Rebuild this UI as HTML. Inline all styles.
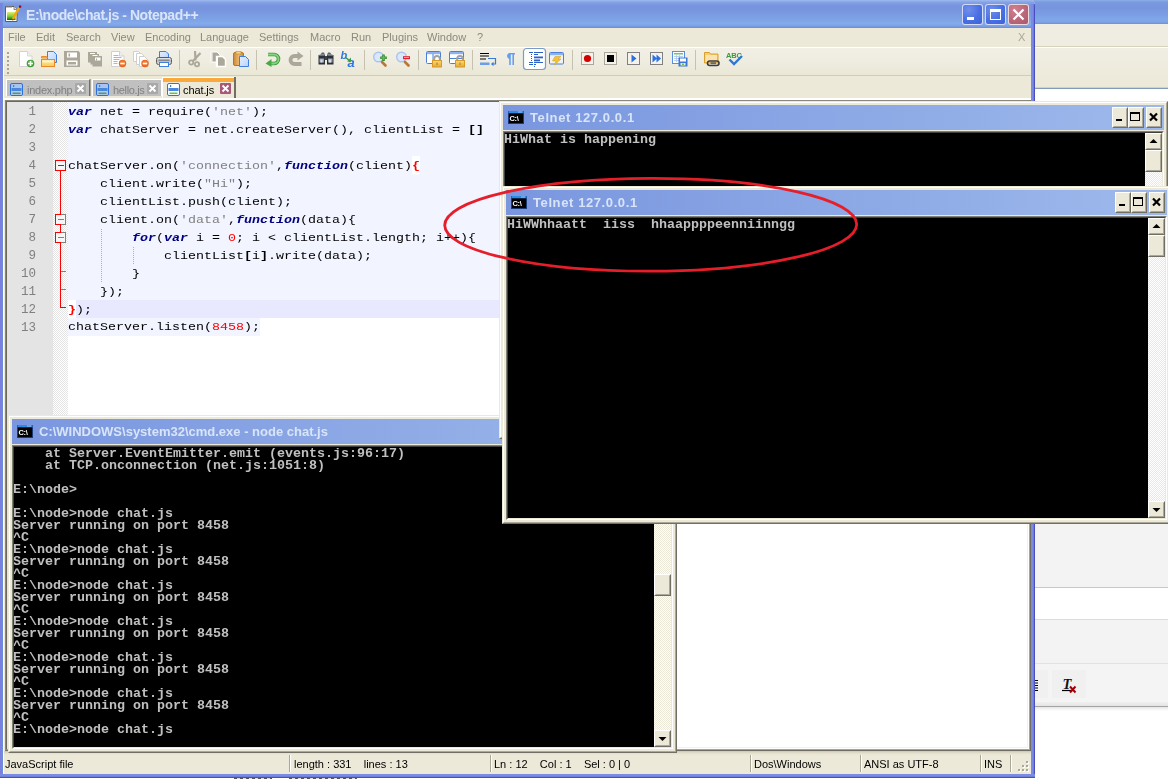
<!DOCTYPE html>
<html>
<head>
<meta charset="utf-8">
<title>Notepad++</title>
<style>
*{box-sizing:border-box;margin:0;padding:0}
html,body{width:1168px;height:779px;overflow:hidden;background:#fff;font-family:"Liberation Sans",sans-serif;}
body{position:relative}
.abs{position:absolute}
.code,.ln,.cap .txt,.title .txt,.menubar,.status,.tab .nm{will-change:transform}
/* ---------- background window on right ---------- */
#bg{position:absolute;left:1020px;top:0;width:148px;height:779px;background:#fff}
#bg .t{position:absolute;left:0;right:0;top:0;height:24px;background:linear-gradient(#8db0ea 0,#7b9ae0 2px,#7794de 7px,#7a9be2 13px,#80a8e8 20px,#7ea4e6 22px,#728cda 24px)}
#bg .a{position:absolute;left:0;right:0;top:24px;height:22px;background:#efede2}
#bg .l1{position:absolute;left:0;right:0;top:46px;height:1px;background:#d8d2bd}
#bg .b{position:absolute;left:0;right:0;top:48px;height:39px;background:linear-gradient(#f0eee3,#ece9d8)}
#bg .l2{position:absolute;left:0;right:0;top:87px;height:1px;background:#d8d2bd}
#bg .l3{position:absolute;left:0;right:0;top:88px;height:1px;background:#7f9db9}
#bg .g1{position:absolute;left:0;right:0;top:522px;height:65px;background:#f3f3f3}
#bg .g1l{position:absolute;left:0;right:0;top:587px;height:1px;background:#c8c8c8}
#bg .g2l{position:absolute;left:0;right:0;top:619px;height:1px;background:#dcdcdc}
#bg .g2{position:absolute;left:0;right:0;top:620px;height:43px;background:#f3f3f3}
#bg .g2b{position:absolute;left:0;right:0;top:663px;height:1px;background:#e2e2e2}
#bg .g3{position:absolute;left:0;right:0;top:664px;height:38px;background:#f4f4f4}
#bg .g3s{position:absolute;left:0;right:0;top:702px;height:4px;background:linear-gradient(#f0f0f0,#e4e4e4)}
#bg .g3l{position:absolute;left:0;right:0;top:706px;height:1px;background:#a4a4a4}
#bg .g3t{position:absolute;left:0;right:0;top:707px;height:4px;background:linear-gradient(#e6e6e6,#fff)}
#bg .bt{position:absolute;top:670px;height:28px;background:#f0f0f0}
/* ---------- notepad++ ---------- */
#npp{position:absolute;left:-1px;top:-2px;width:1036px;height:780px;background:#ece9d8;border-radius:3px 8px 0 0;overflow:hidden}
#npp .fl{position:absolute;left:0;top:5px;bottom:0;width:4px;background:linear-gradient(90deg,#5a5cc8 0,#5a5cc8 1px,#7b7fde 1px,#7b7fde 2px,#7486dd 2px,#7486dd 3px,#6d8ddc 3px)}
#npp .fr{position:absolute;right:0;top:6px;bottom:0;width:4px;background:linear-gradient(90deg,#7b8be3 0,#7b8be3 2px,#6f7ed8 2px,#6f7ed8 3px,#4a4fc0 3px)}
#npp .fb{position:absolute;left:0;right:0;bottom:0;height:4px;background:linear-gradient(180deg,#7b8be3 0,#7b8be3 2px,#6f7ed8 2px,#6f7ed8 3px,#4a4fc0 3px)}
#npp .title{position:absolute;left:0;right:0;top:0;height:30px;background:linear-gradient(#a8c0f0 0,#9ebaee 2px,#86a4e6 4px,#7896df 7px,#7794de 11px,#7a9ae1 16px,#7fa4e6 22px,#83abea 26px,#7d9fe5 28px,#6f88d8 30px)}
#npp .title .txt{position:absolute;left:27px;top:9px;font-weight:bold;font-size:14px;color:#d9e4f8;letter-spacing:-0.45px;white-space:nowrap}
.menubar{position:absolute;left:4px;right:4px;top:30px;height:19px;background:#ece9d8;font-size:11px;color:#8c8a7e}
.menubar span{position:absolute;top:3px}
.toolbar{position:absolute;left:4px;right:4px;top:49px;height:29px;background:linear-gradient(#fff 0,#fff 1px,#f2f0e6 1px,#efede0 14px,#eae7d5 28px,#d1cdb9 28px,#d1cdb9 29px)}
.tabbar{position:absolute;left:4px;right:4px;top:78px;height:24px;background:#ece9d8}
.status{position:absolute;left:4px;right:4px;top:753px;height:23px;background:linear-gradient(#c9c6b4 0,#e2dfcd 2px,#ece9d8 4px);font-size:11px;color:#000}
.status span{position:absolute;top:7px;white-space:nowrap}
.status i{position:absolute;top:4px;width:2px;height:17px;border-left:1px solid #aca899;border-right:1px solid #fff}

.tb{position:absolute;top:6px;width:21px;height:21px;border-radius:3px;border:1px solid rgba(255,255,255,.75);background:radial-gradient(circle at 30% 25%,#6f8fec 0%,#4a6fe2 55%,#3d62d6 100%);overflow:hidden}
.tb svg{position:absolute;left:-1px;top:-1px}
.tb.cl{background:radial-gradient(circle at 30% 25%,#cf8090 0%,#b9687a 55%,#a85868 100%)}
.mx{position:absolute;left:1017px;top:3px;font-size:11px;color:#8c8a7d}
.tab{position:absolute;top:3px;height:17px;background:#c0c0c0;border-top:1px solid #fff;border-left:1px solid #fff;border-right:1px solid #716f64;box-shadow:1px 0 0 #aaa798;font-size:11px;color:#808080}
.tab .nm{position:absolute;left:20px;top:4px;white-space:nowrap;letter-spacing:-0.25px}
.tab svg{position:absolute}
.tab.act{top:2px;height:22px;background:#ece9d8;border-top:4px solid #faaa3c;border-left:0;border-right:0;margin-left:1px;box-shadow:0 -1px 0 #fff,-1px 0 0 #fff,-1px -1px 0 #fff,2px 0 0 #716f64,2px -1px 0 #716f64;color:#000}
.tab.act .nm{top:2px;letter-spacing:-0.1px;left:20px}
.tab.act svg:first-child{top:1px !important}
.tab.nb{border-right:1px solid #fff}
/* editor */
#ed{position:absolute;left:6px;top:102px;width:1026px;height:651px;background:#fff;border:2px solid;border-color:#8a887a #716f64 #716f64 #8a887a;}
#ed .in{position:absolute;left:-1px;top:-1px;right:-1px;bottom:-1px;border:1px solid;border-color:#6b695e #a8a594 #a8a594 #6b695e}
#ed .in2{position:absolute;right:0;bottom:0;left:0;top:0;border:1px solid;border-color:transparent #fff #fff transparent}
#ed .in3{position:absolute;right:1px;bottom:1px;left:0;top:0;border:1px solid;border-color:transparent #f4f1e6 #f4f1e6 transparent}
.lnm{position:absolute;left:0;top:0;width:46px;bottom:0;background:#e4e4e4}
.fdm{position:absolute;left:46px;top:0;width:15px;bottom:0;background-color:#fff;background-image:linear-gradient(45deg,#e4e4e4 25%,transparent 25%,transparent 75%,#e4e4e4 75%),linear-gradient(45deg,#e4e4e4 25%,transparent 25%,transparent 75%,#e4e4e4 75%);background-size:2px 2px;background-position:0 0,1px 1px}
.code{position:absolute;left:61px;top:0;right:0;font-family:"Liberation Mono",monospace;font-size:13.33px;line-height:18px;white-space:pre;color:#000}
.code div{height:18px;background:#f2f4ff;padding-top:1px;line-height:17px}
.code div.cur{background:#e8e8ff}
.code div.last{background:transparent}
.code div.last{padding-top:0;line-height:18px}
.code div.last span.w{background:#f2f4ff;display:inline-block;height:18px;line-height:18px;vertical-align:top}
.code .t{display:inline-block;font-weight:normal;transform:scaleY(0.88);transform-origin:0 12.6px;height:17px}
.k{color:#000080;font-weight:bold;font-style:italic}
.s{color:#808080}
.n{color:#ff0000}
.br{color:#ff0000;font-weight:bold;position:relative}
.br:before{content:"";position:absolute;left:0;width:100%;top:-3.8px;height:20.45px;background:#fff;z-index:-1}
.o{font-weight:bold}
.ln{position:absolute;left:0;top:1px;width:29px;font-family:"Liberation Mono",monospace;font-size:12.5px;line-height:18px;color:#808080;text-align:right;white-space:pre}
/* ---------- classic console windows ---------- */
.cw{position:absolute;width:669px;height:338px;background:#ece9d8;border:1px solid;border-color:#ece9d8 #716f64 #716f64 #ece9d8}
.cw .b2{position:absolute;left:0;top:0;right:0;bottom:0;border:1px solid;border-color:#fff #aca899 #aca899 #fff}
.cw .cap{position:absolute;left:3px;top:3px;width:661px;height:25px;background:linear-gradient(90deg,#7a96df,#9db9eb)}
.cw .cap .txt{position:absolute;left:27px;top:5px;font-weight:bold;font-size:13px;color:#d8e4f8;white-space:nowrap;letter-spacing:0.25px}
.cw .cl{position:absolute;left:3px;top:29px;width:661px;height:304px;border:1px solid;border-color:#808076 #fff #fff #808076;background:#000}
.cw .cl .i2{position:absolute;left:0;top:0;right:0;bottom:0;border:1px solid;border-color:#404040 #ece9d8 #ece9d8 #404040}
.cw .con{position:absolute;left:5px;top:31px;width:640px;height:300px;background:#000;overflow:hidden}
.cw .con pre{position:absolute;left:-1px;top:0.5px;width:641px;height:300px;color:#c0c0c0;font-family:"Liberation Mono",monospace;font-weight:bold;font-size:13.33px;line-height:12px;white-space:pre;will-change:transform}
.cw .sb{position:absolute;left:645px;top:31px;width:17px;height:300px;background-color:#fff;background-image:linear-gradient(45deg,#ece9d8 25%,transparent 25%,transparent 75%,#ece9d8 75%),linear-gradient(45deg,#ece9d8 25%,transparent 25%,transparent 75%,#ece9d8 75%);background-size:2px 2px;background-position:0 0,1px 1px}
.btn3d{position:absolute;background:#ece9d8;border:1px solid;border-color:#fff #716f64 #716f64 #fff}
.btn3d svg{position:absolute;left:0;top:0}
.btn3d:after{content:"";position:absolute;left:0;top:0;right:0;bottom:0;border:1px solid;border-color:#ece9d8 #aca899 #aca899 #ece9d8}
.cb{position:absolute;top:2px;width:16px;height:21px}
</style>
</head>
<body>
<div class="abs" style="left:0;top:0;width:6px;height:6px;background:#5a6fd0"></div>
<div id="bg"><div class="t"></div><div class="a"></div><div class="l1"></div><div class="b"></div><div class="l2"></div><div class="l3"></div>
<div class="g1"></div><div class="g1l"></div><div class="g2l"></div><div class="g2"></div><div class="g2b"></div><div class="g3"></div><div class="g3s"></div><div class="g3l"></div><div class="g3t"></div><div class="bt" style="left:15px;width:13px"></div><div class="bt" style="left:32px;width:34px"></div><svg class="abs" style="left:15px;top:676px" width="50" height="20"><path d="M0,4.500 H3 M0,7 H3 M0,9.500 H3 M0,12 H3 M0,14.500 H3" stroke="#000" stroke-width="1"/><text x="27.500" y="13" font-family="Liberation Serif" font-style="italic" font-weight="bold" font-size="14.500" fill="#101018">T</text><path d="M27,14.500 H36" stroke="#000" stroke-width="1.200"/><path d="M35,10.500 L40.500,16.500 M40.500,10.500 L35,16.500" stroke="#a00008" stroke-width="2"/></svg></div>

<div id="npp">
<div class="title"><div class="txt">E:\node\chat.js - Notepad++</div>
<svg class="abs" style="left:5px;top:6px" width="20" height="20" viewBox="0 0 20 20"><defs><linearGradient id="gNp" x1="0" y1="0" x2="0" y2="1"><stop offset="0" stop-color="#e6ee70"/><stop offset="0.55" stop-color="#7cc83a"/><stop offset="1" stop-color="#0c6a10"/></linearGradient></defs><path d="M1.500,2.500 h8.500 l3,3 v12 h-11.500z" fill="#fff" stroke="#5c5c5c"/><path d="M10,2.500 v3 h3" fill="#e8e8e8" stroke="#6a6a6a" stroke-width="0.800"/><path d="M3,2 v2 M5,2 v2 M7,2 v2" stroke="#888" stroke-width="1"/><rect x="3" y="8" width="8.500" height="8" fill="url(#gNp)"/><path d="M15,3.500 L9,15" stroke="#f5a800" stroke-width="2.400"/><path d="M9,15 l-0.800,1.800 l1.800,-1" fill="#8a5a20"/><rect x="15" y="1.500" width="2.200" height="2.200" fill="#a00018"/></svg>
<div class="tb" style="left:963px"><svg width="21" height="21"><rect x="5" y="13" width="7" height="3" fill="#fff"/></svg></div>
<div class="tb" style="left:986px"><svg width="21" height="21"><rect x="5.500" y="5.500" width="10" height="10" fill="none" stroke="#fff" stroke-width="1"/><rect x="5" y="5" width="11" height="3" fill="#fff"/></svg></div>
<div class="tb cl" style="left:1009px"><svg width="21" height="21"><path d="M5.500,5.500 L15.500,15.500 M15.500,5.500 L5.500,15.500" stroke="#fff" stroke-width="2.200"/></svg></div>
</div>
<div class="menubar"><span style="left:5px">File</span><span style="left:33px">Edit</span><span style="left:63px">Search</span><span style="left:108px">View</span><span style="left:142px">Encoding</span><span style="left:197px">Language</span><span style="left:256px">Settings</span><span style="left:307px">Macro</span><span style="left:348px">Run</span><span style="left:379px">Plugins</span><span style="left:424px">Window</span><span style="left:474px">?</span><span style="left:1015px;color:#a8a69a">X</span></div>
<div class="toolbar"></div>
<div class="tabbar">
<div class="tab" style="left:3px;width:84px"><svg style="left:3px;top:3px" width="13" height="13" viewBox="0 0 13 13"><rect x="0.5" y="0.5" width="12" height="12" rx="1.5" fill="#a9c4ee" stroke="#2f6fd6"/><rect x="3" y="2" width="1.2" height="2" fill="#3f7fe0"/><rect x="1.5" y="5" width="10" height="3" fill="#4a86dc"/><rect x="1.500" y="8" width="10" height="4" fill="#b4cbea"/><rect x="2.5" y="9.5" width="8" height="1.6" fill="#4f9a70"/></svg><span class="nm">index.php</span><svg style="left:68px;top:3px" width="11" height="11"><rect x="0" y="0" width="11" height="11" rx="1" fill="#a8a8a8"/><path d="M2.500,2.500 L8.500,8.500 M8.500,2.500 L2.500,8.500" stroke="#fff" stroke-width="1.800"/></svg></div>
<div class="tab nb" style="left:89px;width:70px"><svg style="left:3px;top:3px" width="13" height="13" viewBox="0 0 13 13"><rect x="0.5" y="0.5" width="12" height="12" rx="1.5" fill="#a9c4ee" stroke="#2f6fd6"/><rect x="3" y="2" width="1.2" height="2" fill="#3f7fe0"/><rect x="1.5" y="5" width="10" height="3" fill="#4a86dc"/><rect x="1.500" y="8" width="10" height="4" fill="#b4cbea"/><rect x="2.5" y="9.5" width="8" height="1.6" fill="#4f9a70"/></svg><span class="nm" style="left:19.5px;letter-spacing:-0.35px">hello.js</span><svg style="left:54px;top:3px" width="11" height="11"><rect x="0" y="0" width="11" height="11" rx="1" fill="#a8a8a8"/><path d="M2.500,2.500 L8.500,8.500 M8.500,2.500 L2.500,8.500" stroke="#fff" stroke-width="1.800"/></svg></div>
<div class="tab act" style="left:159px;width:71px"><svg style="left:4px;top:1px" width="13" height="13" viewBox="0 0 13 13"><rect x="0.500" y="0.500" width="12" height="12" rx="1.500" fill="#fff" stroke="#2f74d8"/><rect x="3" y="2" width="1.200" height="2" fill="#3f7fe0"/><rect x="1.500" y="5" width="10" height="3" fill="#4a86dc"/><rect x="2.500" y="9.500" width="8" height="1.600" fill="#6cc04a"/></svg><span class="nm">chat.js</span><svg style="left:57px;top:1px" width="11" height="11"><rect x="0" y="0" width="11" height="11" rx="1" fill="#a85878"/><path d="M2.500,2.500 L8.500,8.500 M8.500,2.500 L2.500,8.500" stroke="#fff" stroke-width="1.800"/></svg></div>
</div>
<div class="abs" style="left:4px;right:4px;top:100px;height:2px;background:#fff"></div>
<div id="ed"><div class="in"></div><div class="in2"></div><div class="in3"></div>
<div class="lnm"></div><div class="fdm"></div>
<div class="ln">1
2
3
4
5
6
7
8
9
10
11
12
13</div>
<div class="code"><div><b class="t"><span class="k">var</span> net = require(<span class="s">'net'</span>);</b></div><div><b class="t"><span class="k">var</span> chatServer = net.createServer(), clientList = <span class="o">[]</span></b></div><div><b class="t"> </b></div><div><b class="t">chatServer.on(<span class="s">'connection'</span>,<span class="k">function</span>(client)<span class="br">{</span></b></div><div><b class="t">    client.write(<span class="s">"Hi"</span>);</b></div><div><b class="t">    clientList.push(client);</b></div><div><b class="t">    client.on(<span class="s">'data'</span>,<span class="k">function</span>(data){</b></div><div><b class="t">        <span class="k">for</span>(<span class="k">var</span> i = <span class="n">0</span>; i &lt; clientList.length; i++){</b></div><div><b class="t">            clientList<span class="o">[</span>i<span class="o">]</span>.write(data);</b></div><div><b class="t">        }</b></div><div><b class="t">    });</b></div><div class="cur"><b class="t"><span class="br">}</span>);</b></div><div class="last"><span class="w"><b class="t">chatServer.listen(<span class="n">8458</span>);</b></span></div></div>
</div>
<div class="status"><span style="left:2px">JavaScript file</span><i style="left:286px"></i><span style="left:291px">length : 331&nbsp;&nbsp;&nbsp; lines : 13</span><i style="left:487px"></i><span style="left:491px">Ln : 12&nbsp;&nbsp;&nbsp; Col : 1&nbsp;&nbsp;&nbsp; Sel : 0 | 0</span><i style="left:747px"></i><span style="left:751px">Dos\Windows</span><i style="left:857px"></i><span style="left:861px">ANSI as UTF-8</span><i style="left:977px"></i><span style="left:981px">INS</span><i style="left:1007px"></i><svg class="abs" style="right:1px;bottom:1px" width="12" height="12"><g fill="#fff"><rect x="9" y="1" width="2" height="2"/><rect x="5" y="5" width="2" height="2"/><rect x="9" y="5" width="2" height="2"/><rect x="1" y="9" width="2" height="2"/><rect x="5" y="9" width="2" height="2"/><rect x="9" y="9" width="2" height="2"/></g><g fill="#aca899"><rect x="8" y="0" width="2" height="2"/><rect x="4" y="4" width="2" height="2"/><rect x="8" y="4" width="2" height="2"/><rect x="0" y="8" width="2" height="2"/><rect x="4" y="8" width="2" height="2"/><rect x="8" y="8" width="2" height="2"/></g></svg></div>
<div class="abs" style="left:4px;top:30px;bottom:4px;width:1px;background:#fff"></div><div class="fl"></div><div class="fr"></div><div class="fb"></div>
</div>

<svg class="abs" style="left:0;top:100px" width="200" height="240" viewBox="0 100 200 240" shape-rendering="crispEdges">
<path d="M60.500,171 V307.500 H66" fill="none" stroke="#ff0000" stroke-width="1"/>
<path d="M60.500,271.500 H66 M60.500,289.500 H66" stroke="#808080" stroke-width="1"/>
<rect x="55.500" y="160.500" width="10" height="10" fill="#f6f6f6" stroke="#ff0000"/><path d="M58,165.500 H64" stroke="#ff0000"/>
<rect x="55.500" y="214.500" width="10" height="10" fill="#f6f6f6" stroke="#808080"/><path d="M55.500,214 V225 M55,214.500 H61 M55,224.500 H61" stroke="#ff0000" fill="none"/><path d="M58,219.500 H64" stroke="#808080"/>
<rect x="55.500" y="232.500" width="10" height="10" fill="#f6f6f6" stroke="#808080"/><path d="M55.500,232 V243 M55,232.500 H61 M55,242.500 H61" stroke="#ff0000" fill="none"/><path d="M58,237.500 H64" stroke="#808080"/>
<path d="M101.500,229 V282 M133.500,247 V264" stroke="#b0b0b0" stroke-width="1" stroke-dasharray="1,1"/>
</svg>
<svg class="abs" style="left:0;top:46px" width="760" height="32" viewBox="0 0 760 32">
<defs>
<linearGradient id="gFold" x1="0" y1="0" x2="0" y2="1"><stop offset="0" stop-color="#fbe9a8"/><stop offset="1" stop-color="#f6cc52"/></linearGradient>
<linearGradient id="gPage" x1="0" y1="0" x2="1" y2="1"><stop offset="0" stop-color="#e6f0ff"/><stop offset="1" stop-color="#b9d2fa"/></linearGradient>
<linearGradient id="gLock" x1="0" y1="0" x2="0" y2="1"><stop offset="0" stop-color="#f9dc7a"/><stop offset="1" stop-color="#e3a730"/></linearGradient>
<linearGradient id="gClip" x1="0" y1="0" x2="1" y2="0"><stop offset="0" stop-color="#c98a3c"/><stop offset="0.5" stop-color="#eab36a"/><stop offset="1" stop-color="#c98a3c"/></linearGradient>
<linearGradient id="gPrn" x1="0" y1="0" x2="0" y2="1"><stop offset="0" stop-color="#f4f4f4"/><stop offset="0.5" stop-color="#b8b8b8"/><stop offset="1" stop-color="#e8e8e8"/></linearGradient>
<g id="sep"><rect x="0" y="4" width="1" height="20" fill="#c5c2b0"/></g>
<g id="lock"><path d="M2.2,5 v-2.2 a2.8,2.8 0 0 1 5.6,0 v2.2" fill="none" stroke="#a2a2a2" stroke-width="2"/><rect x="0.5" y="4.5" width="9" height="6.5" fill="url(#gLock)" stroke="#d99a28"/><rect x="4.5" y="6.5" width="1" height="2.5" fill="#b07a18"/></g>
<g id="ominus"><circle cx="0" cy="0" r="3.7" fill="#e8641c"/><circle cx="0" cy="-0.5" r="2.8" fill="#f07a30"/><rect x="-2.2" y="-0.8" width="4.4" height="1.6" fill="#fff"/></g>
</defs>
<!-- grip -->
<g fill="#a8a594"><rect x="7" y="6" width="2" height="2"/><rect x="7" y="10" width="2" height="2"/><rect x="7" y="14" width="2" height="2"/><rect x="7" y="18" width="2" height="2"/><rect x="7" y="22" width="2" height="2"/><rect x="7" y="26" width="2" height="2"/></g>
<!-- new -->
<g transform="translate(19,5)"><path d="M0.5,0.5 h8 l4.5,4.5 v10.5 h-12.5z" fill="#fff" stroke="#d2d2d2"/><path d="M8.5,0.5 v4.5 h4.5" fill="#f0f0f0" stroke="#d8d8d8"/><circle cx="11.5" cy="12.5" r="3.8" fill="#3d9a32"/><circle cx="11.5" cy="12" r="2.9" fill="#58b04a"/><path d="M11.5,10 v5 M9,12.5 h5" stroke="#fff" stroke-width="1.6"/></g>
<!-- open -->
<g transform="translate(41,5)"><path d="M6.5,0.5 h6 l3,3 v8 h-9z" fill="url(#gPage)" stroke="#3f7fe0"/><path d="M0.5,5.500 h5 l1,1.5 h-6z" fill="#f6c860" stroke="#e88a2c"/><rect x="0.5" y="8.500" width="13" height="7" fill="url(#gFold)" stroke="#e88a2c"/><rect x="1.5" y="9.500" width="11" height="2" fill="#fdf3c8"/></g>
<!-- save -->
<g transform="translate(64,5)"><path d="M0,0 h14.500 l1.500,1.500 v14.500 h-16z" fill="#aca899"/><rect x="3" y="1.500" width="10" height="5" fill="#fff"/><rect x="4.500" y="2.500" width="1.500" height="3" fill="#aca899"/><rect x="2.500" y="9.500" width="11" height="5" fill="#fff"/><rect x="4" y="11" width="8" height="2.500" fill="#aca899"/></g>
<!-- save all -->
<g transform="translate(87,5)"><path d="M1,1 h9 v2 h2 v2 h3 v10.500 h-9.500 v-2 h-2 v-2 h-2.500z" fill="#aca899"/><rect x="3" y="2" width="5" height="1" fill="#fff"/><rect x="5.500" y="4" width="5" height="1" fill="#fff"/><rect x="8" y="6.500" width="5.500" height="3" fill="#fff"/><rect x="9" y="7.500" width="1" height="2" fill="#aca899"/></g>
<!-- close -->
<g transform="translate(111,5)"><path d="M0.500,0.500 h8 l4.500,4.500 v10.500 h-12.500z" fill="#fff" stroke="#d0d0d0"/><path d="M8.500,0.500 v4.500 h4.500" fill="#f0f0f0" stroke="#d0d0d0"/><path d="M2.500,4.500 h5 M2.500,6.500 h8 M2.500,8.500 h6 M2.500,10.500 h4 M2.500,12.500 h4" stroke="#b4b4b4" stroke-width="1"/><use href="#ominus" x="11.500" y="12.500"/></g>
<!-- close all -->
<g transform="translate(133,5)"><path d="M0.500,0.500 h5 l3,3 v7 h-8z" fill="#fff" stroke="#cfcfcf"/><path d="M3.500,2.500 h5 l3,3 v8 h-8z" fill="#fff" stroke="#cfcfcf"/><path d="M6.500,5.500 h5 l3.500,3.500 v6.500 h-8.500z" fill="#fff" stroke="#cfcfcf"/><use href="#ominus" x="12" y="12.500"/></g>
<!-- print -->
<g transform="translate(156,5)"><path d="M3.500,0.500 h6.500 l2.500,2.500 v5 h-9z" fill="url(#gPage)" stroke="#3f7fe0"/><rect x="0.500" y="6.500" width="15" height="7" rx="2" fill="url(#gPrn)" stroke="#5a5a5a"/><rect x="3.500" y="11.500" width="9" height="4" fill="#fff" stroke="#3f7fe0"/><rect x="2.500" y="8.500" width="11" height="1.500" fill="#8a8a8a"/></g>
<use href="#sep" x="179" y="0"/>
<!-- cut -->
<g transform="translate(188,5)" fill="none" stroke="#aca899"><path d="M7,0 L7.500,9.500 M12.500,2 L4.500,10.500" stroke-width="2.200"/><circle cx="3.200" cy="11.500" r="2.100" stroke-width="1.800"/><circle cx="9" cy="13.200" r="2.100" stroke-width="1.800"/></g>
<!-- copy -->
<g transform="translate(210,5)"><path d="M1,1 h6 l3,3 v7 h-9z" fill="#aca899" stroke="#fff" stroke-width="1"/><path d="M6.500,5.500 h6 l3,3 v7 h-9z" fill="#aca899" stroke="#fff" stroke-width="1.400"/><path d="M1.500,1.500 h1 v9 h-1z" fill="#fff"/><path d="M6.500,5.500 h1.500 v10 h-1.500z" fill="#fff"/></g>
<!-- paste -->
<g transform="translate(233,5)"><rect x="0.500" y="1.500" width="10" height="13" rx="1.500" fill="url(#gClip)" stroke="#b8742a"/><rect x="3" y="0.500" width="5" height="2.500" fill="#f6d27a" stroke="#c98a3c" stroke-width="0.600"/><path d="M6.500,5.500 h6 l3,3 v7 h-9z" fill="url(#gPage)" stroke="#3f7fe0"/></g>
<use href="#sep" x="256" y="0"/>
<!-- undo -->
<g transform="translate(265,5)"><path d="M3,3.500 h6 a4.500,4.500 0 0 1 0,9 h-3" fill="none" stroke="#3f9c3f" stroke-width="3.600"/><path d="M3,3.500 h6 a4.500,4.500 0 0 1 0,9 h-3" fill="none" stroke="#86d47e" stroke-width="1.800"/><path d="M6.500,8 L0.500,12.500 L6.500,16z" fill="#4aa846"/></g>
<!-- redo -->
<g transform="translate(288,5)"><path d="M13,5 h-6.500 a3.500,3.500 0 0 0 0,8 h7" fill="none" stroke="#aca899" stroke-width="3.800"/><path d="M9.500,0.500 L15.500,5 L9.500,9.500z" fill="#aca899"/></g>
<use href="#sep" x="310" y="0"/>
<!-- find binoculars -->
<g transform="translate(318,5)"><path d="M2,4 l2,-2.500 h2 l1,2.500z M9,4 l1,-2.500 h2 l2,2.500z" fill="#5c6470"/><rect x="0.500" y="4" width="6.500" height="9.500" fill="#2c3038"/><rect x="9" y="4" width="6.500" height="9.500" fill="#2c3038"/><rect x="7" y="5" width="2" height="4" fill="#3c424c"/><rect x="1.500" y="7.500" width="4.500" height="4" fill="#9aa2ae"/><rect x="10" y="7.500" width="4.500" height="4" fill="#9aa2ae"/><rect x="2.500" y="8.500" width="2" height="3" fill="#d8dde4"/><rect x="11" y="8.500" width="2" height="3" fill="#d8dde4"/><path d="M1,4 h5.500 M9.500,4 h5.500" stroke="#aab2be" stroke-width="1"/></g>
<!-- replace -->
<g transform="translate(341,5)"><text x="-0.500" y="8" font-family="Liberation Sans" font-style="italic" font-weight="bold" font-size="11" fill="#2b78e4">b</text><text x="6.500" y="15.500" font-family="Liberation Sans" font-style="italic" font-weight="bold" font-size="13" fill="#2b78e4">a</text><path d="M4,6 L9,10" stroke="#3a9a4a" stroke-width="1.600"/><path d="M6,10.500 h4 v-4z" fill="#3a9a4a"/></g>
<use href="#sep" x="364" y="0"/>
<!-- zoom in -->
<g transform="translate(373,5)"><circle cx="5.500" cy="6" r="4.800" fill="#dbe8fb" stroke="#a9c4ee" stroke-width="1.400"/><path d="M9,11 L12.500,14.500" stroke="#b87838" stroke-width="2.600" stroke-linecap="round"/><path d="M10.500,3.500 v6.500 M7.200,6.800 h6.600" stroke="#3a8a2e" stroke-width="2.600"/><path d="M10.500,4.500 v4.500 M8.200,6.800 h4.600" stroke="#66b85a" stroke-width="1.200"/></g>
<!-- zoom out -->
<g transform="translate(396,5)"><circle cx="5.500" cy="6" r="4.800" fill="#dbe8fb" stroke="#a9c4ee" stroke-width="1.400"/><path d="M9,11 L12.500,14.500" stroke="#b87838" stroke-width="2.600" stroke-linecap="round"/><rect x="7" y="5.200" width="7" height="3" fill="#e81c2c"/><rect x="8" y="6" width="5" height="1" fill="#f8a0a0"/></g>
<use href="#sep" x="418" y="0"/>
<!-- sync v -->
<g transform="translate(426,5)"><rect x="0.500" y="0.500" width="14" height="12" rx="1" fill="#fff" stroke="#4a80d8"/><rect x="1" y="1" width="13" height="2.200" fill="#8eb2ee"/><rect x="6.500" y="3" width="1" height="9.500" fill="#4a80d8"/><use href="#lock" x="6" y="5"/></g>
<!-- sync h -->
<g transform="translate(449,5)"><rect x="0.500" y="0.500" width="14" height="12" rx="1" fill="#fff" stroke="#4a80d8"/><rect x="1" y="1" width="13" height="2.200" fill="#8eb2ee"/><rect x="1" y="7" width="13" height="1" fill="#4a80d8"/><use href="#lock" x="6" y="5"/></g>
<use href="#sep" x="472" y="0"/>
<!-- wrap -->
<g transform="translate(480,5)"><path d="M0,2.500 h9 M0,5 h9 M0,8 h6" stroke="#000" stroke-width="1.200"/><rect x="0" y="11.500" width="9.500" height="2.500" fill="#6a9ee8"/><path d="M8,7.500 h7.500 v5.500 h-3" fill="none" stroke="#3a78d8" stroke-width="1.200"/><path d="M13.500,10.800 L11,13 L13.500,15.200z" fill="#3a78d8"/></g>
<!-- pilcrow -->
<g transform="translate(503,5)"><path d="M6,2 h6 v1.500 h-1 v10.500 h-1.600 v-10.500 h-1.600 v10.500 h-1.600 v-6 a3.200,3.200 0 0 1 -0.200,-6z" fill="#64a0f0"/></g>
<!-- indent guide active -->
<rect x="523.500" y="2.500" width="22" height="21" rx="3" fill="#fff" stroke="#7a9ac8" stroke-width="1.200"/>
<g transform="translate(527,5)"><path d="M2,1.500 h4 M7,1.500 h9 M7,3.500 h4 M2,11.500 h4 M7,11.500 h9 M2,13.500 h4 M7,13.500 h2" stroke="#2a62c8" stroke-width="1"/><rect x="7" y="5.500" width="9" height="1.800" fill="#2a62c8"/><rect x="7" y="8.500" width="6" height="1.800" fill="#2a62c8"/><rect x="7" y="15" width="1" height="1" fill="#2a62c8"/><path d="M4.500,3 v8" stroke="#e81010" stroke-width="1" stroke-dasharray="1,1"/></g>
<!-- udl -->
<g transform="translate(549,5)"><rect x="0.500" y="1.500" width="14" height="11.500" rx="1" fill="#eef3fb" stroke="#4a80d8"/><rect x="1" y="2" width="13" height="2.200" fill="#8eb2ee"/><path d="M6,5.500 h6 l-3,2.500 h3 l-6.500,6 l1.500,-4 h-3.500z" fill="#f2c43a" stroke="#d9a520" stroke-width="0.600"/></g>
<use href="#sep" x="572" y="0"/>
<!-- rec -->
<g transform="translate(580,5)"><rect x="1.500" y="1.500" width="12" height="12" fill="#f4f2ea" stroke="#aca899" stroke-width="1"/><circle cx="7.500" cy="7.500" r="3.600" fill="#d40000"/></g>
<g transform="translate(603,5)"><rect x="1.500" y="1.500" width="12" height="12" fill="#f4f2ea" stroke="#aca899" stroke-width="1"/><rect x="4" y="4" width="7" height="7" fill="#000"/></g>
<g transform="translate(626,5)"><rect x="1.500" y="1.500" width="12" height="12" fill="#f4f2ea" stroke="#808080" stroke-width="1"/><path d="M5.500,3.500 L10.500,7.500 L5.500,11.500z" fill="#2a70e0"/></g>
<g transform="translate(649,5)"><rect x="1.500" y="1.500" width="12" height="12" fill="#f4f2ea" stroke="#808080" stroke-width="1"/><path d="M3.500,3.500 L8,7.500 L3.500,11.500z M7.500,3.500 L12,7.500 L7.500,11.500z" fill="#2a70e0"/></g>
<!-- save macro -->
<g transform="translate(672,5)"><rect x="0.500" y="0.500" width="12" height="12" fill="#fff" stroke="#5a8ee0"/><rect x="2" y="2" width="9" height="1.500" fill="#7ac070"/><path d="M2,5.500 h9 M2,7.500 h9 M2,9.500 h9 M4.500,4 v7 M7.500,4 v7" stroke="#a8c4ee" stroke-width="0.800"/><rect x="6.500" y="6.500" width="9" height="9" fill="#3a78d8"/><rect x="8" y="7.500" width="6" height="3" fill="#fff"/><rect x="8.500" y="12" width="5" height="2.500" fill="#e8f0d0"/><rect x="10" y="12.500" width="2" height="1.500" fill="#7ac040"/></g>
<use href="#sep" x="695" y="0"/>
<!-- folder chain -->
<g transform="translate(704,5)"><path d="M0.500,1.500 h5 l1,1.500 h7.500 v9 h-13.500z" fill="#f3cf74" stroke="#d9a02c"/><rect x="1.500" y="4" width="11.500" height="7" fill="#fbe2b0"/><rect x="3.500" y="10" width="11.500" height="4.500" rx="2.200" fill="none" stroke="#3c3c3c" stroke-width="1.600"/><rect x="6.500" y="11.200" width="5.500" height="2" fill="#6a6a6a"/></g>
<!-- abc check -->
<g transform="translate(726,5)"><text x="0" y="6.500" font-family="Liberation Sans" font-weight="bold" font-size="7.500" fill="#3a9a3a" letter-spacing="-0.200">ABC</text><path d="M3.500,8.500 L8,13 L16,5" fill="none" stroke="#2a78d8" stroke-width="2.400"/></g>
</svg>
<div class="abs" style="left:234px;top:778px;width:38px;height:1px;background:repeating-linear-gradient(90deg,#555 0,#555 3px,#ddd 3px,#ddd 6px)"></div><div class="abs" style="left:289px;top:778px;width:68px;height:1px;background:repeating-linear-gradient(90deg,#555 0,#555 3px,#ddd 3px,#ddd 6px)"></div>
<!-- cmd window -->
<div class="cw" style="left:8px;top:415px"><div class="b2"></div>
<div class="cap"><div class="txt" style="letter-spacing:0">C:\WINDOWS\system32\cmd.exe - node chat.js</div><svg class="abs" style="left:5px;top:6px;will-change:transform" width="16" height="13" viewBox="0 0 16 13"><rect x="0" y="0" width="16" height="13" fill="#1c3c78"/><rect x="0.500" y="0" width="15" height="2.200" fill="#2a8ae8"/><rect x="10" y="0.500" width="4" height="1" fill="#9ac0f0"/><rect x="1" y="2.500" width="14" height="9.500" fill="#000"/><text x="1.500" y="9.800" font-family="Liberation Sans" font-weight="bold" font-size="7.500" fill="#fff" letter-spacing="-0.300">C:\</text></svg>
<div class="btn3d cb" style="left:609px"><svg width="14" height="19" shape-rendering="crispEdges"><rect x="3" y="11" width="6" height="2" fill="#000"/></svg></div>
<div class="btn3d cb" style="left:625px"><svg width="14" height="19" shape-rendering="crispEdges"><rect x="1.500" y="4.500" width="9" height="8" fill="none" stroke="#000" stroke-width="1"/><rect x="1" y="4" width="10" height="2" fill="#000"/></svg></div>
<div class="btn3d cb" style="left:643px"><svg width="14" height="19"><path d="M3,5.500 L10,12.500 M10,5.500 L3,12.500" stroke="#000" stroke-width="2.200"/></svg></div></div>
<div class="cl"><div class="i2"></div></div>
<div class="con"><pre>    at Server.EventEmitter.emit (events.js:96:17)
    at TCP.onconnection (net.js:1051:8)

E:\node&gt;

E:\node&gt;node chat.js
Server running on port 8458
^C
E:\node&gt;node chat.js
Server running on port 8458
^C
E:\node&gt;node chat.js
Server running on port 8458
^C
E:\node&gt;node chat.js
Server running on port 8458
^C
E:\node&gt;node chat.js
Server running on port 8458
^C
E:\node&gt;node chat.js
Server running on port 8458
^C
E:\node&gt;node chat.js</pre></div>
<div class="sb"><div class="btn3d" style="left:0;top:0;width:17px;height:17px"><svg width="15" height="15"><path d="M3.500,9 L7.500,5 L11.500,9z" fill="#000"/></svg></div><div class="btn3d" style="left:0;top:127px;width:17px;height:22px"></div><div class="btn3d" style="left:0;top:283px;width:17px;height:17px"><svg width="15" height="15"><path d="M3.500,6 L7.500,10 L11.500,6z" fill="#000"/></svg></div></div>
</div>

<!-- telnet 1 -->
<div class="cw" style="left:499px;top:101px"><div class="b2"></div>
<div class="cap"><div class="txt" style="letter-spacing:0.6px">Telnet 127.0.0.1</div><svg class="abs" style="left:5px;top:6px;will-change:transform" width="16" height="13" viewBox="0 0 16 13"><rect x="0" y="0" width="16" height="13" fill="#1c3c78"/><rect x="0.500" y="0" width="15" height="2.200" fill="#2a8ae8"/><rect x="10" y="0.500" width="4" height="1" fill="#9ac0f0"/><rect x="1" y="2.500" width="14" height="9.500" fill="#000"/><text x="1.500" y="9.800" font-family="Liberation Sans" font-weight="bold" font-size="7.500" fill="#fff" letter-spacing="-0.300">C:\</text></svg>
<div class="btn3d cb" style="left:609px"><svg width="14" height="19" shape-rendering="crispEdges"><rect x="3" y="11" width="6" height="2" fill="#000"/></svg></div>
<div class="btn3d cb" style="left:625px"><svg width="14" height="19" shape-rendering="crispEdges"><rect x="1.500" y="4.500" width="9" height="8" fill="none" stroke="#000" stroke-width="1"/><rect x="1" y="4" width="10" height="2" fill="#000"/></svg></div>
<div class="btn3d cb" style="left:643px"><svg width="14" height="19"><path d="M3,5.500 L10,12.500 M10,5.500 L3,12.500" stroke="#000" stroke-width="2.200"/></svg></div></div>
<div class="cl"><div class="i2"></div></div>
<div class="con"><pre>HiWhat is happening</pre></div>
<div class="sb"><div class="btn3d" style="left:0;top:0;width:17px;height:17px"><svg width="15" height="15"><path d="M3.500,9 L7.500,5 L11.500,9z" fill="#000"/></svg></div><div class="btn3d" style="left:0;top:17px;width:17px;height:22px"></div><div class="btn3d" style="left:0;top:283px;width:17px;height:17px"><svg width="15" height="15"><path d="M3.500,6 L7.500,10 L11.500,6z" fill="#000"/></svg></div></div>
</div>

<!-- telnet 2 -->
<div class="cw" style="left:502px;top:186px"><div class="b2"></div>
<div class="cap"><div class="txt" style="letter-spacing:0.6px">Telnet 127.0.0.1</div><svg class="abs" style="left:5px;top:6px;will-change:transform" width="16" height="13" viewBox="0 0 16 13"><rect x="0" y="0" width="16" height="13" fill="#1c3c78"/><rect x="0.500" y="0" width="15" height="2.200" fill="#2a8ae8"/><rect x="10" y="0.500" width="4" height="1" fill="#9ac0f0"/><rect x="1" y="2.500" width="14" height="9.500" fill="#000"/><text x="1.500" y="9.800" font-family="Liberation Sans" font-weight="bold" font-size="7.500" fill="#fff" letter-spacing="-0.300">C:\</text></svg>
<div class="btn3d cb" style="left:609px"><svg width="14" height="19" shape-rendering="crispEdges"><rect x="3" y="11" width="6" height="2" fill="#000"/></svg></div>
<div class="btn3d cb" style="left:625px"><svg width="14" height="19" shape-rendering="crispEdges"><rect x="1.500" y="4.500" width="9" height="8" fill="none" stroke="#000" stroke-width="1"/><rect x="1" y="4" width="10" height="2" fill="#000"/></svg></div>
<div class="btn3d cb" style="left:643px"><svg width="14" height="19"><path d="M3,5.500 L10,12.500 M10,5.500 L3,12.500" stroke="#000" stroke-width="2.200"/></svg></div></div>
<div class="cl"><div class="i2"></div></div>
<div class="con"><pre>HiWWhhaatt  iiss  hhaappppeenniinngg</pre></div>
<div class="sb"><div class="btn3d" style="left:0;top:0;width:17px;height:17px"><svg width="15" height="15"><path d="M3.500,9 L7.500,5 L11.500,9z" fill="#000"/></svg></div><div class="btn3d" style="left:0;top:17px;width:17px;height:22px"></div><div class="btn3d" style="left:0;top:283px;width:17px;height:17px"><svg width="15" height="15"><path d="M3.500,6 L7.500,10 L11.500,6z" fill="#000"/></svg></div></div>
</div>

<svg class="abs" style="left:0;top:0;pointer-events:none" width="1168" height="779"><ellipse cx="650.7" cy="224.8" rx="206" ry="46.4" fill="none" stroke="#e61e2a" stroke-width="2.8" transform="rotate(-0.15 650.7 224.8)"/></svg>
</body>
</html>
